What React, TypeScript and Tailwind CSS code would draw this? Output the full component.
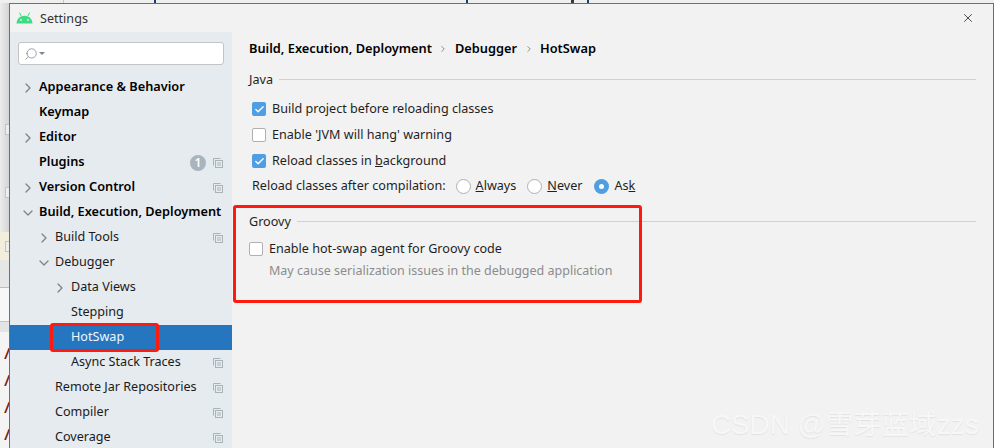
import { Check, ChevronDown, ChevronRight, Search, X } from "lucide-react";
import type { ReactNode } from "react";

const FONT = "font-['Noto_Sans','Liberation_Sans',sans-serif]";

interface NavRow {
  label: string;
  indent: string;
  bold?: boolean;
  arrow?: "right" | "down";
  copy?: boolean;
  badge?: string;
  selected?: boolean;
}

const navRows: NavRow[] = [
  { label: "Appearance & Behavior", indent: "pl-[12px]", bold: true, arrow: "right" },
  { label: "Keymap", indent: "pl-[12px]", bold: true },
  { label: "Editor", indent: "pl-[12px]", bold: true, arrow: "right" },
  { label: "Plugins", indent: "pl-[12px]", bold: true, badge: "1", copy: true },
  { label: "Version Control", indent: "pl-[12px]", bold: true, arrow: "right", copy: true },
  { label: "Build, Execution, Deployment", indent: "pl-[12px]", bold: true, arrow: "down" },
  { label: "Build Tools", indent: "pl-[28px]", arrow: "right", copy: true },
  { label: "Debugger", indent: "pl-[28px]", arrow: "down" },
  { label: "Data Views", indent: "pl-[44px]", arrow: "right" },
  { label: "Stepping", indent: "pl-[44px]" },
  { label: "HotSwap", indent: "pl-[44px]", selected: true },
  { label: "Async Stack Traces", indent: "pl-[44px]", copy: true },
  { label: "Remote Jar Repositories", indent: "pl-[28px]", copy: true },
  { label: "Compiler", indent: "pl-[28px]", copy: true },
  { label: "Coverage", indent: "pl-[28px]", copy: true },
];

function AndroidLogo() {
  return (
    <svg width="17" height="12" viewBox="0 0 17 12" className="shrink-0">
      <path d="M0.5 11.5C0.8 6.8 4 3.8 8.5 3.8S16.2 6.8 16.5 11.5Z" fill="#3ddc84" />
      <path d="M3.4 0.6L5.2 4M13.6 0.6L11.8 4" stroke="#3ddc84" strokeWidth="1" />
      <circle cx="5" cy="8" r="0.9" fill="#f2f2f2" />
      <circle cx="12" cy="8" r="0.9" fill="#f2f2f2" />
    </svg>
  );
}

function CopyIcon() {
  return (
    <svg width="10" height="10" viewBox="0 0 10 10" fill="none" stroke="#a9b3ba" strokeWidth="1" className="shrink-0">
      <path d="M0.5 7.5V0.5H7.5" />
      <rect x="2.5" y="2.5" width="7" height="7" />
      <path d="M4 5H8M4 7H8" />
    </svg>
  );
}

function SidebarRow({ row }: { row: NavRow }) {
  return (
    <div className={`flex h-[25px] items-center pr-[9px] ${row.indent} ${row.selected ? "bg-[#2675bf] text-[#f2f6fa]" : "text-[#1a1a1a]"}`}>
      <span className="flex w-[17px] shrink-0 items-center">
        {row.arrow === "right" && <ChevronRight size={16} strokeWidth={2} className="-ml-[2px] text-[#7d868c]" />}
        {row.arrow === "down" && <ChevronDown size={16} strokeWidth={2} className="-ml-[2px] text-[#7d868c]" />}
      </span>
      <span className={`whitespace-nowrap ${row.bold ? "pb-[2px] text-[12.75px] font-semibold text-black" : ""}`}>{row.label}</span>
      <span className="flex-1" />
      {row.badge && (
        <span className="mr-[7px] flex h-[16px] w-[16px] items-center justify-center rounded-full bg-[#a9b5be] text-[12px] font-semibold text-white">
          {row.badge}
        </span>
      )}
      {row.copy && <CopyIcon />}
    </div>
  );
}

function Checkbox({ checked, label }: { checked?: boolean; label: ReactNode }) {
  return (
    <div className="flex items-center gap-[6px] whitespace-nowrap">
      {checked ? (
        <span className="flex h-[14px] w-[14px] items-center justify-center rounded-[2px] bg-[#4f9ee3]">
          <Check size={11} strokeWidth={3} className="text-white" />
        </span>
      ) : (
        <span className="h-[14px] w-[14px] rounded-[2px] border border-[#b0b0b0] bg-white" />
      )}
      <span>{label}</span>
    </div>
  );
}

function Radio({ checked, label }: { checked?: boolean; label: ReactNode }) {
  return (
    <div className="flex items-center gap-[5px]">
      {checked ? (
        <span className="flex h-[15px] w-[15px] items-center justify-center rounded-full bg-[#4f9ee3]">
          <span className="h-[5px] w-[5px] rounded-full bg-white" />
        </span>
      ) : (
        <span className="h-[15px] w-[15px] rounded-full border border-[#b0b0b0] bg-white" />
      )}
      <span>{label}</span>
    </div>
  );
}

function SectionTitle({ title }: { title: string }) {
  return (
    <div className="flex h-[18px] items-center gap-[6px]">
      <span className="pt-[2px]">{title}</span>
      <span className="h-px flex-1 bg-[#d1d1d1]" />
    </div>
  );
}

function TopStrip() {
  return (
    <div className="flex h-[3px] shrink-0 bg-[#efefef]">
      <span className="ml-[63px] w-px bg-[#c8c8c8]" />
      <span className="ml-[90px] w-[2px] bg-[#1c3f70]" />
      <span className="ml-[310px] w-[2px] bg-[#1c3f70]" />
      <span className="ml-[103px] w-[3px] bg-[#3a3a3a]" />
      <span className="ml-[13px] w-[2px] bg-[#1c3f70]" />
    </div>
  );
}

function FoldMark() {
  return <span className="mt-[9px] ml-[5px] block h-[11px] w-[4px] border border-r-0 border-[#c4c4c4] bg-[#eeeeee]" />;
}

// sliver of the code editor that sticks out behind the dialog
function EditorSliver() {
  return (
    <div className="flex w-[9px] shrink-0 flex-col overflow-hidden bg-[#f4f4f4]">
      <div className="h-[229px] shrink-0 bg-gradient-to-r from-[#ececec] to-[#d4d4d4] pt-[2px]">
        <div className="h-[110px]" />
        <FoldMark />
        <div className="h-[43px]" />
        <FoldMark />
      </div>
      <div className="h-[28px] shrink-0 bg-[#f3eddc]"><FoldMark /></div>
      <div className="h-[28px] shrink-0 border-b border-[#bdbdbd] bg-[#e6e6e6]" />
      <div className="h-[33px] shrink-0 bg-[#f7f7f7]" />
      <div className="h-[11px] shrink-0 border-t border-[#c4c4c4] bg-[#e4e4e4]" />
      <div className="flex flex-col items-end pt-[8px] font-['Liberation_Sans',sans-serif] text-[15px] font-bold italic leading-[27px] text-[#7a1f14]">
        <span>/</span>
        <span>/</span>
        <span>/</span>
        <span>/</span>
      </div>
    </div>
  );
}

export default function App() {
  return (
    <div className={`relative flex h-[448px] w-[994px] flex-col overflow-hidden bg-white text-[12.6px] text-[#1f1f1f] ${FONT}`}>
      <TopStrip />
      <div className="flex min-h-0 flex-1">
        <EditorSliver />
        <div className="flex min-w-0 flex-1 flex-col border-t border-r border-l border-[#6f6f6f] bg-[#f2f2f2]">
          <div className="flex h-[28px] shrink-0 items-center pr-[18px] pl-[6px]">
            <AndroidLogo />
            <span className="ml-[7px] pt-[2px] text-[#333333]">Settings</span>
            <span className="flex-1" />
            <X size={14} strokeWidth={1.3} className="text-[#1a1a1a]" />
          </div>
          <div className="flex min-h-0 flex-1">
            <div className="w-[222px] shrink-0 overflow-hidden bg-[#e6ebf0]">
              <div className="px-[8px] pt-[10px] pb-[10px]">
                <div className="flex h-[23px] items-center gap-[1px] rounded-[3px] border border-[#c4c4c4] bg-white pl-[5px]">
                  <Search size={14} strokeWidth={1.3} className="-scale-x-100 text-[#7d868c]" />
                  <span className="h-0 w-0 border-x-[3px] border-t-[3px] border-x-transparent border-t-[#7d868c]" />
                </div>
              </div>
              {navRows.map((row) => (
                <SidebarRow key={row.label} row={row} />
              ))}
            </div>
            <div className="min-w-0 flex-1 pt-[7px] pr-[17px] pl-[17px]">
              <div className="flex h-[20px] items-center gap-[6px] text-[12.8px] font-semibold text-black">
                <span>Build, Execution, Deployment</span>
                <ChevronRight size={10} strokeWidth={1.5} className="mx-[0.5px] text-[#555555]" />
                <span>Debugger</span>
                <ChevronRight size={10} strokeWidth={1.5} className="mx-[0.5px] text-[#555555]" />
                <span>HotSwap</span>
              </div>
              <div className="mt-[11px]">
                <SectionTitle title="Java" />
              </div>
              <div className="mt-[12px] flex flex-col gap-[8px] pl-[3px]">
                <div className="h-[18px]"><Checkbox checked label="Build project before reloading classes" /></div>
                <div className="h-[18px]"><Checkbox label="Enable 'JVM will hang' warning" /></div>
                <div className="h-[18px]"><Checkbox checked label={<>Reload classes in <u>b</u>ackground</>} /></div>
                <div className="-mt-[1px] flex h-[18px] items-center gap-[10px]">
                  <span>Reload classes after compilation:</span>
                  <Radio label={<><u>A</u>lways</>} />
                  <div className="ml-[1px]">
                    <Radio label={<><u>N</u>ever</>} />
                  </div>
                  <div className="ml-[2px]">
                    <Radio checked label={<>As<u>k</u></>} />
                  </div>
                </div>
              </div>
              <div className="mt-[17px]">
                <SectionTitle title="Groovy" />
              </div>
              <div className="mt-[10px]">
                <div className="h-[18px]"><Checkbox label="Enable hot-swap agent for Groovy code" /></div>
                <div className="mt-[4px] pl-[20px] text-[12.5px] text-[#8c8c8c]">May cause serialization issues in the debugged application</div>
              </div>
            </div>
          </div>
        </div>
      </div>

      {/* annotations drawn on top of the screenshot */}
      <div className="absolute top-[323px] left-[50px] h-[29px] w-[109px] rounded-[3px] border-[3px] border-[#ff1a0f]" />
      <div className="absolute top-[205px] left-[233px] h-[98px] w-[409px] rounded-[3px] border-[3px] border-[#ff1a0f]" />
      <div className="absolute top-[404px] left-[711px] font-['Liberation_Sans','Noto_Sans_CJK_SC',sans-serif] text-[27.8px] whitespace-nowrap text-[#f7f7f7] [text-shadow:0_1px_1px_#e2e2e2]">
        CSDN @雪芽蓝域zzs
      </div>
    </div>
  );
}
